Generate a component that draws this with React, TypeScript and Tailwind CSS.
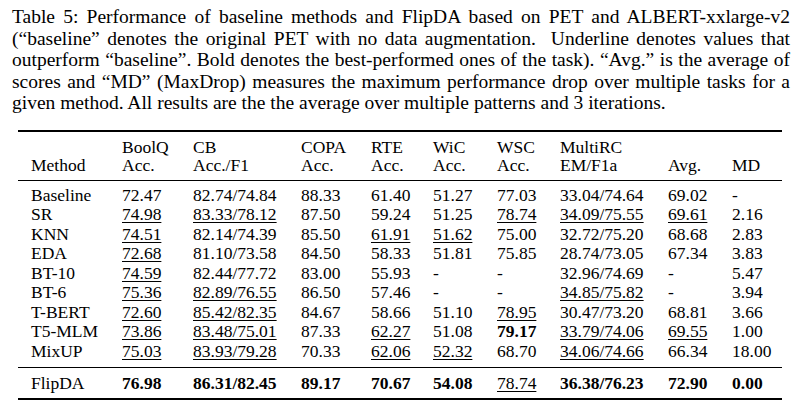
import React from 'react';

type Cell = { v: string; u?: boolean; b?: boolean };

const captionLines = [
  'Table 5: Performance of baseline methods and FlipDA based on PET and ALBERT-xxlarge-v2',
  '(“baseline” denotes the original PET with no data augmentation.  Underline denotes values that',
  'outperform “baseline”. Bold denotes the best-performed ones of the task). “Avg.” is the average of',
  'scores and “MD” (MaxDrop) measures the maximum performance drop over multiple tasks for a',
];
const lastLine = 'given method. All results are the the average over multiple patterns and 3 iterations.';

const c = (v: string, u = false, b = false): Cell => ({ v, u, b });

const rows: { name: string; cells: Cell[] }[] = [
  { name: 'Baseline', cells: [c('72.47'), c('82.74/74.84'), c('88.33'), c('61.40'), c('51.27'), c('77.03'), c('33.04/74.64'), c('69.02'), c('-')] },
  { name: 'SR', cells: [c('74.98', true), c('83.33/78.12', true), c('87.50'), c('59.24'), c('51.25'), c('78.74', true), c('34.09/75.55', true), c('69.61', true), c('2.16')] },
  { name: 'KNN', cells: [c('74.51', true), c('82.14/74.39'), c('85.50'), c('61.91', true), c('51.62', true), c('75.00'), c('32.72/75.20'), c('68.68'), c('2.83')] },
  { name: 'EDA', cells: [c('72.68', true), c('81.10/73.58'), c('84.50'), c('58.33'), c('51.81'), c('75.85'), c('28.74/73.05'), c('67.34'), c('3.83')] },
  { name: 'BT-10', cells: [c('74.59', true), c('82.44/77.72'), c('83.00'), c('55.93'), c('-'), c('-'), c('32.96/74.69'), c('-'), c('5.47')] },
  { name: 'BT-6', cells: [c('75.36', true), c('82.89/76.55', true), c('86.50'), c('57.46'), c('-'), c('-'), c('34.85/75.82', true), c('-'), c('3.94')] },
  { name: 'T-BERT', cells: [c('72.60', true), c('85.42/82.35', true), c('84.67'), c('58.66'), c('51.10'), c('78.95', true), c('30.47/73.20'), c('68.81'), c('3.66')] },
  { name: 'T5-MLM', cells: [c('73.86', true), c('83.48/75.01', true), c('87.33'), c('62.27', true), c('51.08'), c('79.17', false, true), c('33.79/74.06', true), c('69.55', true), c('1.00')] },
  { name: 'MixUP', cells: [c('75.03', true), c('83.93/79.28', true), c('70.33'), c('62.06', true), c('52.32', true), c('68.70'), c('34.06/74.66', true), c('66.34'), c('18.00')] },
];

const flip: Cell[] = [
  c('76.98', false, true), c('86.31/82.45', false, true), c('89.17', false, true), c('70.67', false, true),
  c('54.08', false, true), c('78.74', true), c('36.38/76.23', false, true), c('72.90', false, true), c('0.00', false, true),
];

const grid = 'grid grid-cols-[91px_71px_108px_70px_62px_64px_63px_108px_64px_51px] pl-[13px]';

const CellText = ({ cell }: { cell: Cell }) => (
  <div className="whitespace-nowrap">
    <span className={`${cell.u ? 'underline decoration-1 underline-offset-[2px]' : ''} ${cell.b ? 'font-bold' : ''}`}>
      {cell.v}
    </span>
  </div>
);

export default function App() {
  return (
    <div className="w-[800px] h-[411px] bg-white text-black overflow-hidden font-['Liberation_Serif','Times_New_Roman',serif]">
      <div className="pl-[12px] pr-[10px] pt-[6px] text-[19.5px] leading-[21.5px]">
        {captionLines.map((l) => (
          <div key={l} className="text-justify [text-align-last:justify] whitespace-pre">
            {l}
          </div>
        ))}
        <div>{lastLine}</div>
      </div>

      <div className="mx-[18px] mt-[16px] text-[17.5px]">
        <div className="border-t-2 border-black" />
        <div className={`${grid} pt-[6px] pb-[5px] leading-[18.5px]`}>
          <div className="flex items-end">Method</div>
          <div>BoolQ<br />Acc.</div>
          <div>CB<br />Acc./F1</div>
          <div>COPA<br />Acc.</div>
          <div>RTE<br />Acc.</div>
          <div>WiC<br />Acc.</div>
          <div>WSC<br />Acc.</div>
          <div>MultiRC<br />EM/F1a</div>
          <div className="flex items-end">Avg.</div>
          <div className="flex items-end">MD</div>
        </div>
        <div className="border-t border-black" />
        <div className="pt-[5px] pb-[6px] leading-[19.5px]">
          {rows.map((r) => (
            <div key={r.name} className={grid}>
              <div>{r.name}</div>
              {r.cells.map((cell, i) => (
                <CellText key={i} cell={cell} />
              ))}
            </div>
          ))}
        </div>
        <div className="border-t border-black" />
        <div className={`${grid} pt-[6px] pb-[4px] leading-[19.5px]`}>
          <div>FlipDA</div>
          {flip.map((cell, i) => (
            <CellText key={i} cell={cell} />
          ))}
        </div>
        <div className="border-t-2 border-black" />
      </div>
    </div>
  );
}
